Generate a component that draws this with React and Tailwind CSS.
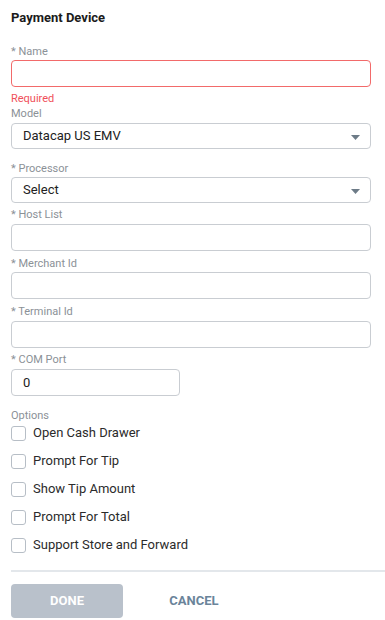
import React, { useState } from "react";

const labelCls = "block text-[11px] leading-[14px] text-[#8b9197]";
const inputCls =
  "block w-full h-[27px] rounded-[4px] border border-[#c9cdd2] bg-white px-[11px] text-[13px] text-[#222] outline-none";

const Caret = () => (
  <svg width="9" height="5" viewBox="0 0 9 5" className="absolute right-[10px] top-[11px]">
    <path d="M0 0h9L4.5 5z" fill="#6d7b87" />
  </svg>
);

const SelectBox = ({ value, className }) => (
  <div
    className={
      "relative h-[26px] rounded-[4px] border border-[#c9cdd2] bg-white px-[11px] text-[13px] leading-[24px] text-[#222] " +
      className
    }
  >
    {value}
    <Caret />
  </div>
);

const options = [
  "Open Cash Drawer",
  "Prompt For Tip",
  "Show Tip Amount",
  "Prompt For Total",
  "Support Store and Forward",
];

export default function App() {
  const [checked, setChecked] = useState({});
  const [com, setCom] = useState("0");

  return (
    <div className="w-[385px] h-[620px] overflow-hidden bg-white pl-[11px] pr-[14px] pt-[10px] font-['Roboto',sans-serif]">
      <h3 className="text-[13px] leading-[16px] font-bold text-[#1b1b1b]">Payment Device</h3>

      <label className={"mt-[19px] " + labelCls}>* Name</label>
      <input className={inputCls + " mt-[1px] border-[#f26a6a]"} />
      <div className="mt-[5px] text-[11px] leading-[14px] text-[#f0505a]">Required</div>

      <label className={"mt-[1px] " + labelCls}>Model</label>
      <SelectBox value="Datacap US EMV" className="mt-[2px]" />

      <label className={"mt-[13px] " + labelCls}>* Processor</label>
      <SelectBox value="Select" className="mt-[1px]" />

      <label className={"mt-[5px] " + labelCls}>* Host List</label>
      <input className={inputCls + " mt-[2px]"} />

      <label className={"mt-[6px] " + labelCls}>* Merchant Id</label>
      <input className={inputCls + " mt-[1px]"} />

      <label className={"mt-[6px] " + labelCls}>* Terminal Id</label>
      <input className={inputCls + " mt-[2px]"} />

      <label className={"mt-[5px] " + labelCls}>* COM Port</label>
      <input
        className={inputCls + " mt-[2px] !w-[169px]"}
        value={com}
        onChange={(e) => setCom(e.target.value)}
      />

      <div className="mt-[14px] text-[11px] leading-[12px] text-[#8b9197]">Options</div>
      <div className="-mt-[3px] flex flex-col">
        {options.map((o) => (
          <label key={o} className="flex h-[28px] items-center gap-[7px] cursor-pointer">
            <input
              type="checkbox"
              className="peer sr-only"
              checked={!!checked[o]}
              onChange={() => setChecked((c) => ({ ...c, [o]: !c[o] }))}
            />
            <span className="h-[15px] w-[15px] rounded-[3px] border border-[#b7bec6] bg-white peer-checked:bg-[#6d8aa3]" />
            <span className="text-[13px] text-[#2b2b2b]">{o}</span>
          </label>
        ))}
      </div>

      <div className="mt-[11px] -mr-[14px] h-[2px] bg-[#e3e7eb]" />

      <div className="mt-[12px] flex gap-[15px]">
        <button className="h-[34px] w-[112px] rounded-[4px] bg-[#b9c1cb] text-[13px] font-bold text-white">
          DONE
        </button>
        <button className="h-[34px] w-[112px] text-[13px] font-bold text-[#6a849a]">CANCEL</button>
      </div>
    </div>
  );
}
